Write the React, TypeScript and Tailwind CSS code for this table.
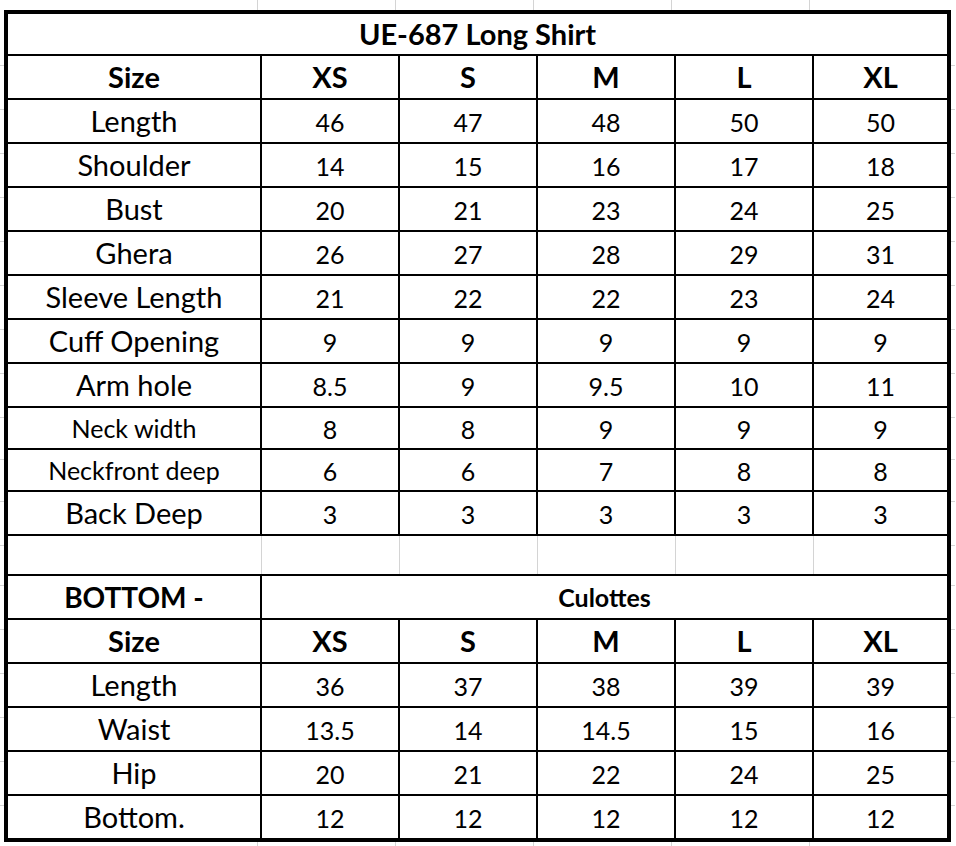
import React from 'react'

const FONT = { fontFamily: 'Lato, "Open Sans", sans-serif' }

// column widths incl. their right border (last one has none)
const colW = ['w-[254px]', 'w-[138px]', 'w-[138px]', 'w-[138px]', 'w-[138px]', 'w-[133px]']
const sizes = ['XS', 'S', 'M', 'L', 'XL']

type Row = { label: string; values: string[]; h: string; small?: boolean }

const shirtRows: Row[] = [
  { label: 'Length', values: ['46', '47', '48', '50', '50'], h: 'h-[44px]' },
  { label: 'Shoulder', values: ['14', '15', '16', '17', '18'], h: 'h-[44px]' },
  { label: 'Bust', values: ['20', '21', '23', '24', '25'], h: 'h-[44px]' },
  { label: 'Ghera', values: ['26', '27', '28', '29', '31'], h: 'h-[44px]' },
  { label: 'Sleeve Length', values: ['21', '22', '22', '23', '24'], h: 'h-[44px]' },
  { label: 'Cuff Opening', values: ['9', '9', '9', '9', '9'], h: 'h-[44px]' },
  { label: 'Arm hole', values: ['8.5', '9', '9.5', '10', '11'], h: 'h-[44px]' },
  { label: 'Neck width', values: ['8', '8', '9', '9', '9'], h: 'h-[42px]', small: true },
  { label: 'Neckfront deep', values: ['6', '6', '7', '8', '8'], h: 'h-[42px]', small: true },
  { label: 'Back Deep', values: ['3', '3', '3', '3', '3'], h: 'h-[44px]' },
]

const bottomRows: Row[] = [
  { label: 'Length', values: ['36', '37', '38', '39', '39'], h: 'h-[44px]' },
  { label: 'Waist', values: ['13.5', '14', '14.5', '15', '16'], h: 'h-[44px]' },
  { label: 'Hip', values: ['20', '21', '22', '24', '25'], h: 'h-[44px]' },
  { label: 'Bottom.', values: ['12', '12', '12', '12', '12'], h: 'h-[42px]' },
]

function Cell({ i, children, className = '' }: { i: number; children?: React.ReactNode; className?: string }) {
  return (
    <div
      className={`${colW[i]} shrink-0 flex items-center justify-center whitespace-nowrap ${
        i < 5 ? 'border-r-2 border-black' : ''
      } ${className}`}
    >
      {children}
    </div>
  )
}

function SizeHeader({ h = 'h-[44px]' }: { h?: string }) {
  return (
    <div className={`flex ${h} border-b-2 border-black font-bold text-[29px]`}>
      <Cell i={0}>Size</Cell>
      {sizes.map((s, i) => (
        <Cell key={s} i={i + 1}>
          {s}
        </Cell>
      ))}
    </div>
  )
}

function DataRow({ row, last }: { row: Row; last?: boolean }) {
  return (
    <div className={`flex ${row.h} ${last ? '' : 'border-b-2 border-black'}`}>
      <Cell i={0} className={row.small ? 'text-[25px] pt-[2px]' : 'text-[29px]'}>
        {row.label}
      </Cell>
      {row.values.map((v, i) => (
        <Cell key={i} i={i + 1} className="text-[25px] pt-[3px]">
          {v}
        </Cell>
      ))}
    </div>
  )
}

// light spreadsheet gridline stubs outside the bordered table
const gridX = ['w-[258px]', 'w-[138px]', 'w-[138px]', 'w-[138px]', 'w-[138px]']
const gridY = [
  'h-[42px]', 'h-[44px]', 'h-[44px]', 'h-[44px]', 'h-[44px]', 'h-[44px]', 'h-[44px]', 'h-[44px]',
  'h-[44px]', 'h-[42px]', 'h-[42px]', 'h-[44px]', 'h-[40px]', 'h-[44px]', 'h-[44px]', 'h-[44px]',
  'h-[44px]', 'h-[44px]',
]

function TopStub({ h }: { h: string }) {
  return (
    <div className={`flex ${h}`}>
      {gridX.map((w, i) => (
        <div key={i} className={`${w} shrink-0 border-r border-[#d4d4d4]`} />
      ))}
    </div>
  )
}

function SideStub() {
  return (
    <div className="flex flex-col w-[4px] pt-[14px]">
      {gridY.map((h, i) => (
        <div key={i} className={`${h} shrink-0 border-b border-[#d4d4d4]`} />
      ))}
    </div>
  )
}

export default function App() {
  return (
    <div className="w-[956px] h-[846px] bg-white text-black overflow-hidden" style={FONT}>
      <TopStub h="h-[10px]" />
      <div className="flex">
        <SideStub />
        <div className="w-[947px] border-4 border-black">
          <div className="flex h-[42px] items-center justify-center border-b-2 border-black font-bold text-[29px]">
            UE-687 Long Shirt
          </div>
          <SizeHeader />
          {shirtRows.map((r) => (
            <DataRow key={r.label} row={r} />
          ))}

          {/* spacer row */}
          <div className="flex h-[40px] border-b-2 border-black">
            {colW.map((w, i) => (
              <div key={i} className={`${w} shrink-0 ${i < 5 ? 'border-r border-[#d4d4d4]' : ''}`} />
            ))}
          </div>

          <div className="flex h-[44px] border-b-2 border-black font-bold">
            <Cell i={0} className="text-[28px]">
              BOTTOM -
            </Cell>
            <div className="flex-1 flex items-center justify-center text-[25px] pt-[1px]">Culottes</div>
          </div>
          <SizeHeader />
          {bottomRows.map((r, i) => (
            <DataRow key={r.label} row={r} last={i === bottomRows.length - 1} />
          ))}
        </div>
        <SideStub />
      </div>
      <TopStub h="h-[4px]" />
    </div>
  )
}
